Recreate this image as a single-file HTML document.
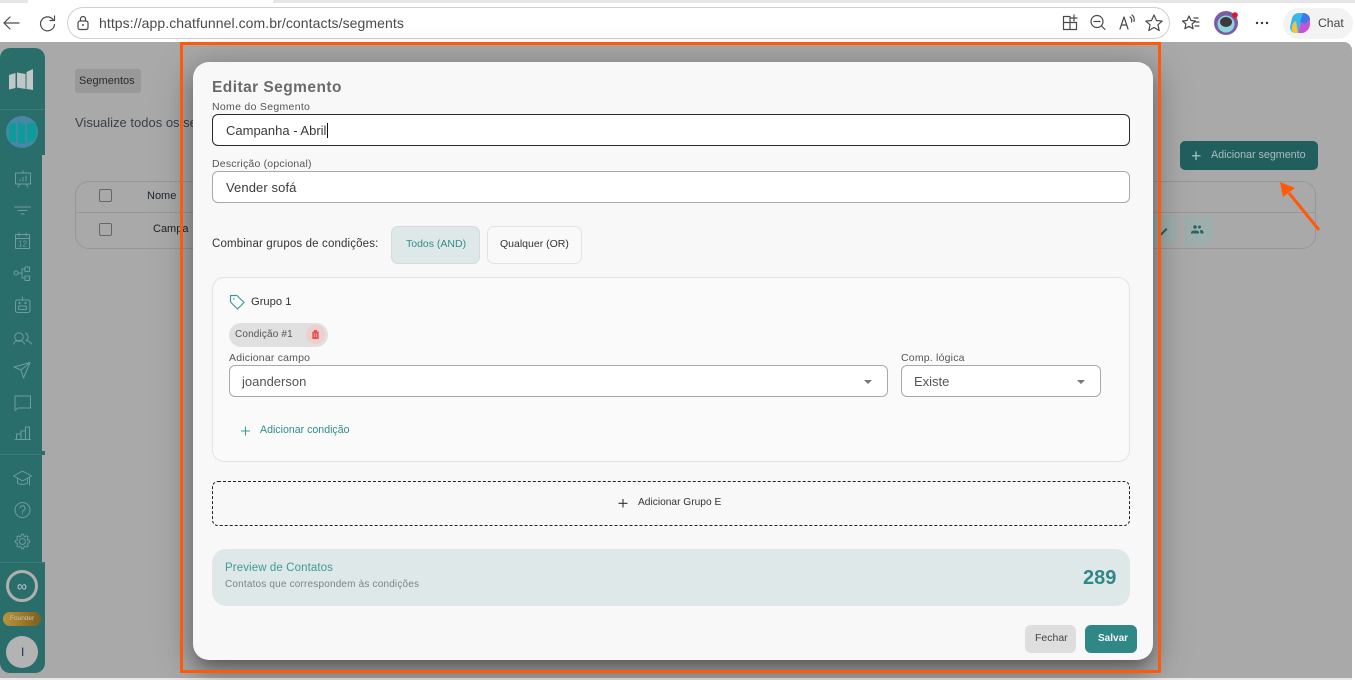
<!DOCTYPE html>
<html lang="pt-BR">
<head>
<meta charset="utf-8">
<title>Editar Segmento</title>
<style>
html,body{margin:0;padding:0;width:1355px;height:680px;overflow:hidden;background:#fff;font-family:"Liberation Sans",sans-serif;}
.a{position:absolute;box-sizing:border-box;}
.t{position:absolute;white-space:nowrap;line-height:1;}
svg{position:absolute;overflow:visible;}
.side{fill:none;stroke:#6f9d9b;stroke-width:1;stroke-linecap:round;stroke-linejoin:round;}
.tb{fill:none;stroke:#4a4a4a;stroke-width:1.2;stroke-linecap:round;stroke-linejoin:round;}
.input{background:#fff;border:1px solid #a9a9a9;border-radius:6px;}
</style>
</head>
<body>
<!-- Browser chrome -->
<div class="a" style="left:0;top:0;width:1355px;height:3px;background:#e6e6e6"></div>
<div class="a" style="left:28px;top:0;width:245px;height:3px;background:#fff"></div>
<div class="a" style="left:0;top:3px;width:1355px;height:39px;background:#fff"></div>
<svg style="left:0;top:0" width="1355" height="42">
  <path class="tb" d="M19 23H4M10 17l-6 6 6 6"/>
  <path class="tb" d="M53 19.500a7 7 0 1 0 1.500 5M54.500 16v4.500H50"/>
  <rect class="tb" x="78" y="21" width="10" height="8.500" rx="2"/>
  <path class="tb" d="M80.500 21v-2a2.500 2.500 0 0 1 5 0v2"/>
  <circle cx="83" cy="25" r="1" fill="#4a4a4a"/>
  <path class="tb" d="M1070 16.500h-6.500v13h13v-7h-13M1070 16.500v13M1074 15v6M1071 18h6"/>
  <circle class="tb" cx="1097" cy="21.500" r="6"/>
  <path class="tb" d="M1094 21.500h6M1101.500 26l3.500 3.500"/>
  <path class="tb" d="M1120 29l4-12 4 12M1121.500 25h5M1130 17c1.500 1 2 3 1.500 5M1132 15c2 1.500 2.500 4 2 6.500"/>
  <path class="tb" d="M1154 15l2.500 5.500 5.700.6-4.300 3.700 1.300 5.700-5.200-3-5.200 3 1.300-5.700-4.300-3.700 5.700-.6z"/>
  <path class="tb" d="M1189 16l2 4.500 4.500.5-3.400 3 1 4.700-4.100-2.400-4.100 2.400 1-4.700-3.400-3 4.500-.5zM1194 18h4M1196 22h3M1195 26h4"/>
  <circle cx="1226" cy="23" r="12" fill="#7a5ea5"/>
  <circle cx="1226" cy="24" r="8.500" fill="#8fd3dc"/>
  <ellipse cx="1226" cy="22" rx="6" ry="5" fill="#3a3a3a"/>
  <circle cx="1235" cy="15" r="2.800" fill="#e81123"/>
  <circle cx="1257" cy="23" r="1.200" fill="#333"/><circle cx="1262" cy="23" r="1.200" fill="#333"/><circle cx="1267" cy="23" r="1.200" fill="#333"/>
</svg>
<div class="a" style="left:67px;top:7px;width:1103px;height:32px;border:1px solid #cfcfcf;border-radius:16px"></div>
<div class="t" style="left:99px;top:16px;font-size:14px;color:#4a4a4a;letter-spacing:.08px">https://app.chatfunnel.com.br/contacts/segments</div>
<div class="a" style="left:1283px;top:8px;width:70px;height:31px;background:#f3f3f3;border-radius:16px"></div>
<svg style="left:1289px;top:12px" width="23" height="23" viewBox="0 0 23 23">
  <path d="M3 6q2-5 7-5h4L9 21H6q-5-1-5-6z" fill="#37b8e8"/>
  <path d="M3 15q0-4 4-6l2 12H6q-4-1-3-6z" fill="#f5c33b"/>
  <path d="M14 1q5 0 7 5v7q-1 6-7 8H9z" fill="#c455d9"/>
  <path d="M14 1l-3 9 5 2 5-5q-2-6-7-6z" fill="#3b7be8"/>
</svg>
<div class="t" style="left:1318px;top:17px;font-size:12.200px;color:#444">Chat</div>

<!-- Dimmed page -->
<div class="a" style="left:0;top:42px;width:1352px;height:638px;background:#a9a9a9;border-radius:0 8px 0 0"></div>
<div class="a" style="left:0;top:678px;width:1352px;height:2px;background:#e8e8e8"></div>

<!-- Sidebar -->
<div class="a" style="left:0;top:48px;width:45px;height:107px;background:#2a6e6c;border-radius:10px 10px 0 0"></div>
<div class="a" style="left:0;top:155px;width:42px;height:408px;background:#2a6e6c"></div>
<div class="a" style="left:0;top:562px;width:45px;height:111px;background:#2a6e6c;border-radius:0 0 10px 10px"></div>
<div class="a" style="left:0;top:109px;width:45px;height:1px;background:#3a7a78"></div>
<div class="a" style="left:0;top:454px;width:42px;height:1px;background:#3a7a78"></div>
<div class="a" style="left:0;top:562px;width:45px;height:1px;background:#3a7a78"></div>
<svg style="left:0;top:0" width="46" height="680">
  <path d="M9 75l6.500-2v15l-6.500 1.500zM17 72.500l8.500 1.500v15L17 87.500zM26.500 72l6.500-3v21l-6.500-1z" fill="#c0c8c7"/>
  <circle cx="22" cy="132" r="16" fill="#4a86a5"/>
  <path d="M9 124l7-1v20l-7-2zM18 122l7 2v20l-7-1zM27 124l9-2v18l-9 3z" fill="#0e9c9a"/>
  <g class="side">
    <rect x="15.500" y="173" width="15" height="11"/><path d="M23 170.500v2.500M18 187l2-3M28 187l-2-3"/><path d="M20 181v-1.500M23 181v-3.500M26 181v-5"/>
    <path d="M14.500 207h16M18 210.500h9M21 214h3"/>
    <rect x="15.500" y="234.500" width="14" height="14"/><path d="M15.500 238.500h14M19 233v3M26 233v3"/>
    <circle cx="16" cy="273" r="2"/><rect x="25" y="267" width="4.500" height="4.500"/><rect x="25" y="276" width="4.500" height="4.500"/><path d="M18 273h4M22 269v9h3M22 269h3"/>
    <rect x="15.500" y="300" width="14.500" height="12.500" rx="2"/><rect x="18.500" y="306" width="8" height="3.500" rx="1"/><path d="M22.500 300v-3"/><circle cx="19.500" cy="303" r=".6"/><circle cx="25.500" cy="303" r=".6"/>
    <circle cx="19" cy="337" r="4.200"/><path d="M13.500 344q1-3.500 5.500-3.500t5.500 3.500M25.500 333a4.200 4.200 0 0 1 .5 7.500q4 .5 5.500 3.500"/>
    <path d="M14 367l16-4.500-6.500 15.500-2.500-8zM21 370l9-7.500"/>
    <path d="M15 396h15.500v12H18l-3 2.500z"/>
    <path d="M15 439.500h15.500M16.500 439v-5h4.500v5M21 439v-8h4.500v8M25.500 439v-12h4v12"/>
    <path d="M13.500 476l9-5 9 5-9 5zM17.500 479v4q5 3 10 0v-4M29.500 477v8"/>
    <circle cx="22.500" cy="510" r="7.500"/><path d="M20 508a2.500 2.500 0 1 1 3.500 2.500q-1 .5-1 2M22.500 514v.3"/>
    <circle cx="22.500" cy="541.500" r="3"/>
    <path transform="translate(14.500 533.500) scale(.667)" stroke-width="1.500" d="M19.400 15a1.650 1.650 0 0 0 .33 1.820l.06.06a2 2 0 0 1 0 2.830 2 2 0 0 1-2.830 0l-.06-.06a1.650 1.650 0 0 0-1.820-.33 1.650 1.650 0 0 0-1 1.510V21a2 2 0 0 1-2 2 2 2 0 0 1-2-2v-.09A1.650 1.650 0 0 0 9 19.400a1.650 1.650 0 0 0-1.820.33l-.06.06a2 2 0 0 1-2.830 0 2 2 0 0 1 0-2.830l.06-.06a1.650 1.650 0 0 0 .33-1.820 1.650 1.650 0 0 0-1.510-1H3a2 2 0 0 1-2-2 2 2 0 0 1 2-2h.09A1.650 1.650 0 0 0 4.600 9a1.650 1.650 0 0 0-.33-1.820l-.06-.06a2 2 0 0 1 0-2.830 2 2 0 0 1 2.830 0l.06.06a1.650 1.650 0 0 0 1.820.33H9a1.650 1.650 0 0 0 1-1.510V3a2 2 0 0 1 2-2 2 2 0 0 1 2 2v.09a1.650 1.650 0 0 0 1 1.510 1.650 1.650 0 0 0 1.820-.33l.06-.06a2 2 0 0 1 2.830 0 2 2 0 0 1 0 2.830l-.06.06a1.650 1.650 0 0 0-.33 1.820V9a1.650 1.650 0 0 0 1.510 1H21a2 2 0 0 1 2 2 2 2 0 0 1-2 2h-.09a1.650 1.650 0 0 0-1.510 1z"/>
  </g>
  <text x="22.500" y="246.500" font-size="8" text-anchor="middle" fill="#6f9d9b" font-family="Liberation Sans, sans-serif">12</text>
  <rect x="42" y="451" width="3" height="4" fill="#2a6e6c"/>
</svg>
<div class="a" style="left:6px;top:570px;width:32px;height:32px;border:3.500px solid #b0b0b0;border-radius:50%"></div>
<div class="t" style="left:17px;top:579px;font-size:14px;color:#c4c9c9">∞</div>
<div class="a" style="left:3px;top:612px;width:38px;height:14px;border-radius:7px;background:linear-gradient(90deg,#b8963e,#8f6f25 70%,#7d6020)"></div>
<div class="t" style="left:10px;top:616px;font-size:6.500px;color:#c9c5b5">Founder</div>
<div class="a" style="left:6px;top:636px;width:32px;height:32px;border-radius:50%;background:#b3b3b3"></div>
<div class="t" style="left:21px;top:646px;font-size:12px;color:#1a2f60">I</div>

<!-- Background page content -->
<div class="a" style="left:75px;top:69px;width:66px;height:24px;background:#999;border-radius:3px"></div>
<div class="t" style="left:79px;top:76px;font-size:11px;color:#2b2b2b">Segmentos</div>
<div class="t" style="left:75px;top:116px;font-size:13px;color:#3a4048">Visualize todos os se</div>
<div class="a" style="left:1180px;top:141px;width:138px;height:29px;background:#215f5e;border-radius:5px"></div>
<div class="t" style="left:1211px;top:150px;font-size:10.800px;color:#a9bcbb;letter-spacing:-.05px">Adicionar segmento</div>
<svg style="left:1190px;top:149px" width="14" height="14"><path d="M6 2.500v8.500M2 6.800h8.500" stroke="#bcc9c8" stroke-width="1.200" fill="none"/></svg>
<div class="a" style="left:75px;top:181px;width:1241px;height:68px;border:1px solid #979797;border-radius:14px"></div>
<div class="a" style="left:76px;top:212px;width:1239px;height:1px;background:#979797"></div>
<div class="a" style="left:99px;top:189px;width:13px;height:13px;border:1.500px solid #666;border-radius:2px"></div>
<div class="a" style="left:99px;top:223px;width:13px;height:13px;border:1.500px solid #666;border-radius:2px"></div>
<div class="t" style="left:147px;top:191px;font-size:11px;color:#1f2530">Nome</div>
<div class="t" style="left:153px;top:224px;font-size:11px;color:#222">Campa</div>
<div class="a" style="left:1150px;top:216px;width:27px;height:29px;background:#9caead;border-radius:6px"></div>
<div class="a" style="left:1184px;top:216px;width:29px;height:29px;background:#9caead;border-radius:6px"></div>
<svg style="left:1150px;top:216px" width="64" height="29">
  <path d="M10 18l6-6 1.500 1.500-6 6-2 .5z" fill="#2a6260"/>
  <circle cx="45" cy="11" r="1.700" fill="#2a6260"/><circle cx="49.500" cy="11" r="1.500" fill="#2a6260"/>
  <path d="M41 17.500v-1q0-2 4-2t4 2v1zM50 14q3.500 0 3.500 2v1.500H50.500" fill="#2a6260"/>
</svg>

<!-- Arrow -->
<svg style="left:1270px;top:175px" width="60" height="65">
  <path d="M49 55L19 18" stroke="#ff5a0a" stroke-width="3" fill="none"/>
  <path d="M10 7l15 6-12 9z" fill="#ff5a0a"/>
</svg>

<!-- Modal -->
<div class="a" style="left:193px;top:62px;width:960px;height:598px;background:#f8f8f8;border-radius:16px;box-shadow:0 11px 15px -7px rgba(0,0,0,.25),0 10px 24px 2px rgba(0,0,0,.22),0 6px 40px 6px rgba(0,0,0,.16)"></div>
<div class="a" style="left:180px;top:42px;width:981px;height:631px;border:3px solid #ff5a0a"></div>
<div class="t" style="left:212px;top:79.500px;font-size:15.500px;font-weight:bold;color:#6a6a6a;letter-spacing:.45px">Editar Segmento</div>
<div class="t" style="left:212px;top:101.500px;font-size:10.500px;color:#555;letter-spacing:.3px">Nome do Segmento</div>
<div class="a" style="left:212px;top:114px;width:918px;height:32px;background:#fff;border:1.500px solid #2a2a2a;border-radius:6px"></div>
<div class="t" style="left:226px;top:124px;font-size:13px;color:#3a3a3a">Campanha - Abril</div>
<div class="a" style="left:327px;top:123px;width:1px;height:15px;background:#111"></div>
<div class="t" style="left:212px;top:158.500px;font-size:10.500px;color:#555;letter-spacing:.2px">Descrição (opcional)</div>
<div class="a input" style="left:212px;top:171px;width:918px;height:32px"></div>
<div class="t" style="left:226px;top:181px;font-size:13px;color:#3a3a3a;letter-spacing:.1px">Vender sofá</div>

<div class="t" style="left:212px;top:239px;font-size:11.500px;color:#333;letter-spacing:.14px">Combinar grupos de condições:</div>
<div class="a" style="left:391px;top:226px;width:89px;height:38px;background:#dfe8e8;border:1px solid #d2dcdc;border-radius:7px"></div>
<div class="t" style="left:406px;top:239px;font-size:10.500px;color:#2f8f8a">Todos (AND)</div>
<div class="a" style="left:487px;top:226px;width:95px;height:38px;background:#f9f9f9;border:1px solid #e3e3e3;border-radius:7px"></div>
<div class="t" style="left:500px;top:239px;font-size:10.500px;color:#333">Qualquer (OR)</div>

<div class="a" style="left:212px;top:277px;width:918px;height:185px;background:#fafafa;border:1px solid #e2e2e2;border-radius:12px"></div>
<svg style="left:228px;top:293px" width="18" height="18">
  <path d="M2.500 2.500h6.500l7 7-6.500 6.500-7-7z" fill="none" stroke="#3f9a96" stroke-width="1.200" stroke-linejoin="round"/>
  <circle cx="5.800" cy="5.800" r=".8" fill="#3f9a96"/>
</svg>
<div class="t" style="left:251px;top:296.500px;font-size:11.200px;color:#333">Grupo 1</div>
<div class="a" style="left:229px;top:323px;width:99px;height:24px;background:#e0e0e0;border-radius:12px"></div>
<div class="t" style="left:235px;top:330px;font-size:10px;color:#555;letter-spacing:.15px">Condição #1</div>
<div class="a" style="left:306px;top:325px;width:19px;height:19px;background:#eccfce;border-radius:50%"></div>
<svg style="left:306px;top:325px" width="19" height="19">
  <path d="M6.300 6.500h6.400v7.500h-6.400zM8 5h3v1.500H8z" fill="#ee5050"/>
  <path d="M8.300 8.500v3.500M10.700 8.500v3.500" stroke="#f5b5b5" stroke-width=".8"/>
</svg>
<div class="t" style="left:229px;top:352.500px;font-size:10.500px;color:#555;letter-spacing:.2px">Adicionar campo</div>
<div class="a input" style="left:229px;top:365px;width:659px;height:32px"></div>
<div class="t" style="left:242px;top:375px;font-size:13px;color:#555">joanderson</div>
<div class="a" style="left:864px;top:380px;border:4.500px solid transparent;border-top:4.500px solid #777;border-bottom:0"></div>
<div class="t" style="left:901px;top:352.500px;font-size:10.500px;color:#555;letter-spacing:.2px">Comp. lógica</div>
<div class="a input" style="left:901px;top:365px;width:200px;height:32px"></div>
<div class="t" style="left:914px;top:375px;font-size:13px;color:#555">Existe</div>
<div class="a" style="left:1077px;top:380px;border:4.500px solid transparent;border-top:4.500px solid #777;border-bottom:0"></div>
<svg style="left:239px;top:424px" width="14" height="14"><path d="M6.500 2.500v9M2 7h9" stroke="#3f9a96" stroke-width="1.100" fill="none"/></svg>
<div class="t" style="left:260px;top:425px;font-size:10.600px;color:#2f8f8a">Adicionar condição</div>

<div class="a" style="left:212px;top:481px;width:918px;height:45px;border:1px dashed #222;border-radius:6px"></div>
<svg style="left:616px;top:496px" width="14" height="14"><path d="M7 3v8.500M2.500 7.300h9" stroke="#333" stroke-width="1.100" fill="none"/></svg>
<div class="t" style="left:638px;top:498px;font-size:10.200px;color:#333">Adicionar Grupo E</div>

<div class="a" style="left:212px;top:549px;width:918px;height:57px;background:#dfe8e8;border-radius:14px"></div>
<div class="t" style="left:225px;top:563px;font-size:11.500px;color:#3f9a96;letter-spacing:.1px">Preview de Contatos</div>
<div class="t" style="left:225px;top:580px;font-size:10px;color:#7a8585;letter-spacing:.18px">Contatos que correspondem às condições</div>
<div class="t" style="left:1083px;top:568px;font-size:20px;font-weight:bold;color:#2f8885">289</div>

<div class="a" style="left:1025px;top:625px;width:51px;height:28px;background:#dedede;border-radius:6px"></div>
<div class="t" style="left:1035px;top:633px;font-size:10.500px;color:#444">Fechar</div>
<div class="a" style="left:1085px;top:625px;width:52px;height:28px;background:#2f8885;border-radius:6px"></div>
<div class="t" style="left:1098px;top:634px;font-size:10px;font-weight:bold;color:#f2f7f7">Salvar</div>
</body>
</html>
